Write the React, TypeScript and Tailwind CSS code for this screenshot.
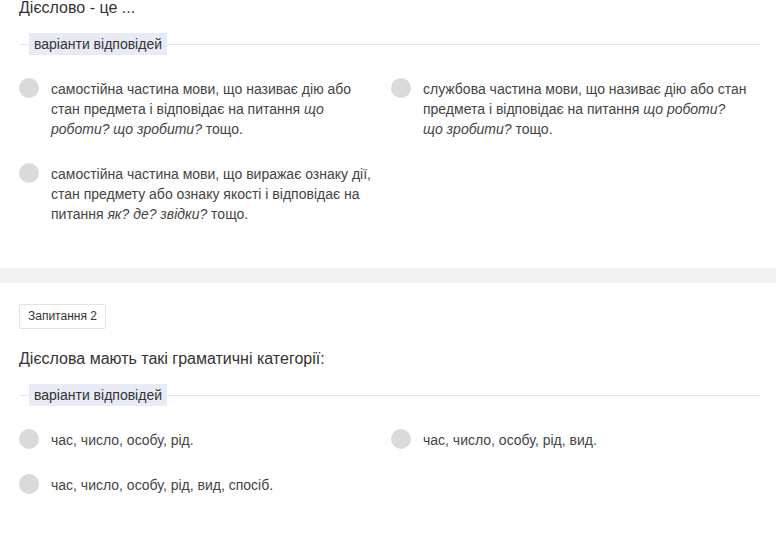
import React from 'react'

type Option = { id: string; text: React.ReactNode }

const q1: Option[] = [
  {
    id: 'a',
    text: (
      <>
        самостійна частина мови, що називає дію або стан предмета і відповідає на питання{' '}
        <i>що роботи? що зробити?</i> тощо.
      </>
    ),
  },
  {
    id: 'b',
    text: (
      <>
        службова частина мови, що називає дію або стан предмета і відповідає на питання{' '}
        <i>що роботи? що{'\u00a0'}зробити?</i> тощо.
      </>
    ),
  },
  {
    id: 'c',
    text: (
      <>
        самостійна частина мови, що виражає ознаку дії, стан предмету або ознаку якості і відповідає на
        питання <i>як? де? звідки?</i> тощо.
      </>
    ),
  },
]

const q2: Option[] = [
  { id: 'a', text: 'час, число, особу, рід.' },
  { id: 'b', text: 'час, число, особу, рід, вид.' },
  { id: 'c', text: 'час, число, особу, рід, вид, спосіб.' },
]

function AnswersLabel() {
  return (
    <div className="flex items-center">
      <div className="w-[10px] h-px bg-[#e6e6e6]" />
      <span className="px-[5px] h-[22px] leading-[22px] bg-[#e8eaf6] text-[14px] text-[#333]">
        варіанти відповідей
      </span>
      <div className="flex-1 h-px bg-[#e6e6e6]" />
    </div>
  )
}

function Options({ items }: { items: Option[] }) {
  return (
    <div className="grid grid-cols-[372px_1fr] gap-y-[25px] mt-[24px]">
      {items.map((o, i) => (
        <div key={o.id} className="flex items-start gap-[12px]">
          <span className="mt-[-1px] w-[20px] h-[20px] rounded-full bg-[#dadada] shrink-0" />
          <p
            className={
              i % 2 === 0
                ? 'text-[14px] leading-[20px] text-[#444] max-w-[320px]'
                : 'text-[14px] leading-[20px] text-[#444] max-w-[326px]'
            }
          >
            {o.text}
          </p>
        </div>
      ))}
    </div>
  )
}

export default function App() {
  return (
    <div
      className="w-[776px] h-[538px] overflow-hidden bg-white"
      style={{ fontFamily: '"Liberation Sans", Arial, sans-serif' }}
    >
      <section className="pl-[19px] pr-[16px] pb-[44px]">
        <h2 className="text-[16px] leading-[16px] text-[#333] mb-[17px]">Дієслово - це ...</h2>
        <AnswersLabel />
        <Options items={q1} />
      </section>

      <div className="h-[15px] bg-[#f2f2f2]" />

      <section className="pl-[19px] pr-[16px] pt-[20px]">
        <span className="inline-block px-[8px] h-[25px] leading-[23px] border border-[#e3e3e3] rounded-[2px] text-[12px] text-[#333]">
          Запитання 2
        </span>
        <h2 className="mt-[22px] text-[16px] leading-[16px] text-[#333] mb-[17px]">
          Дієслова мають такі граматичні категорії:
        </h2>
        <AnswersLabel />
        <Options items={q2} />
      </section>
    </div>
  )
}
